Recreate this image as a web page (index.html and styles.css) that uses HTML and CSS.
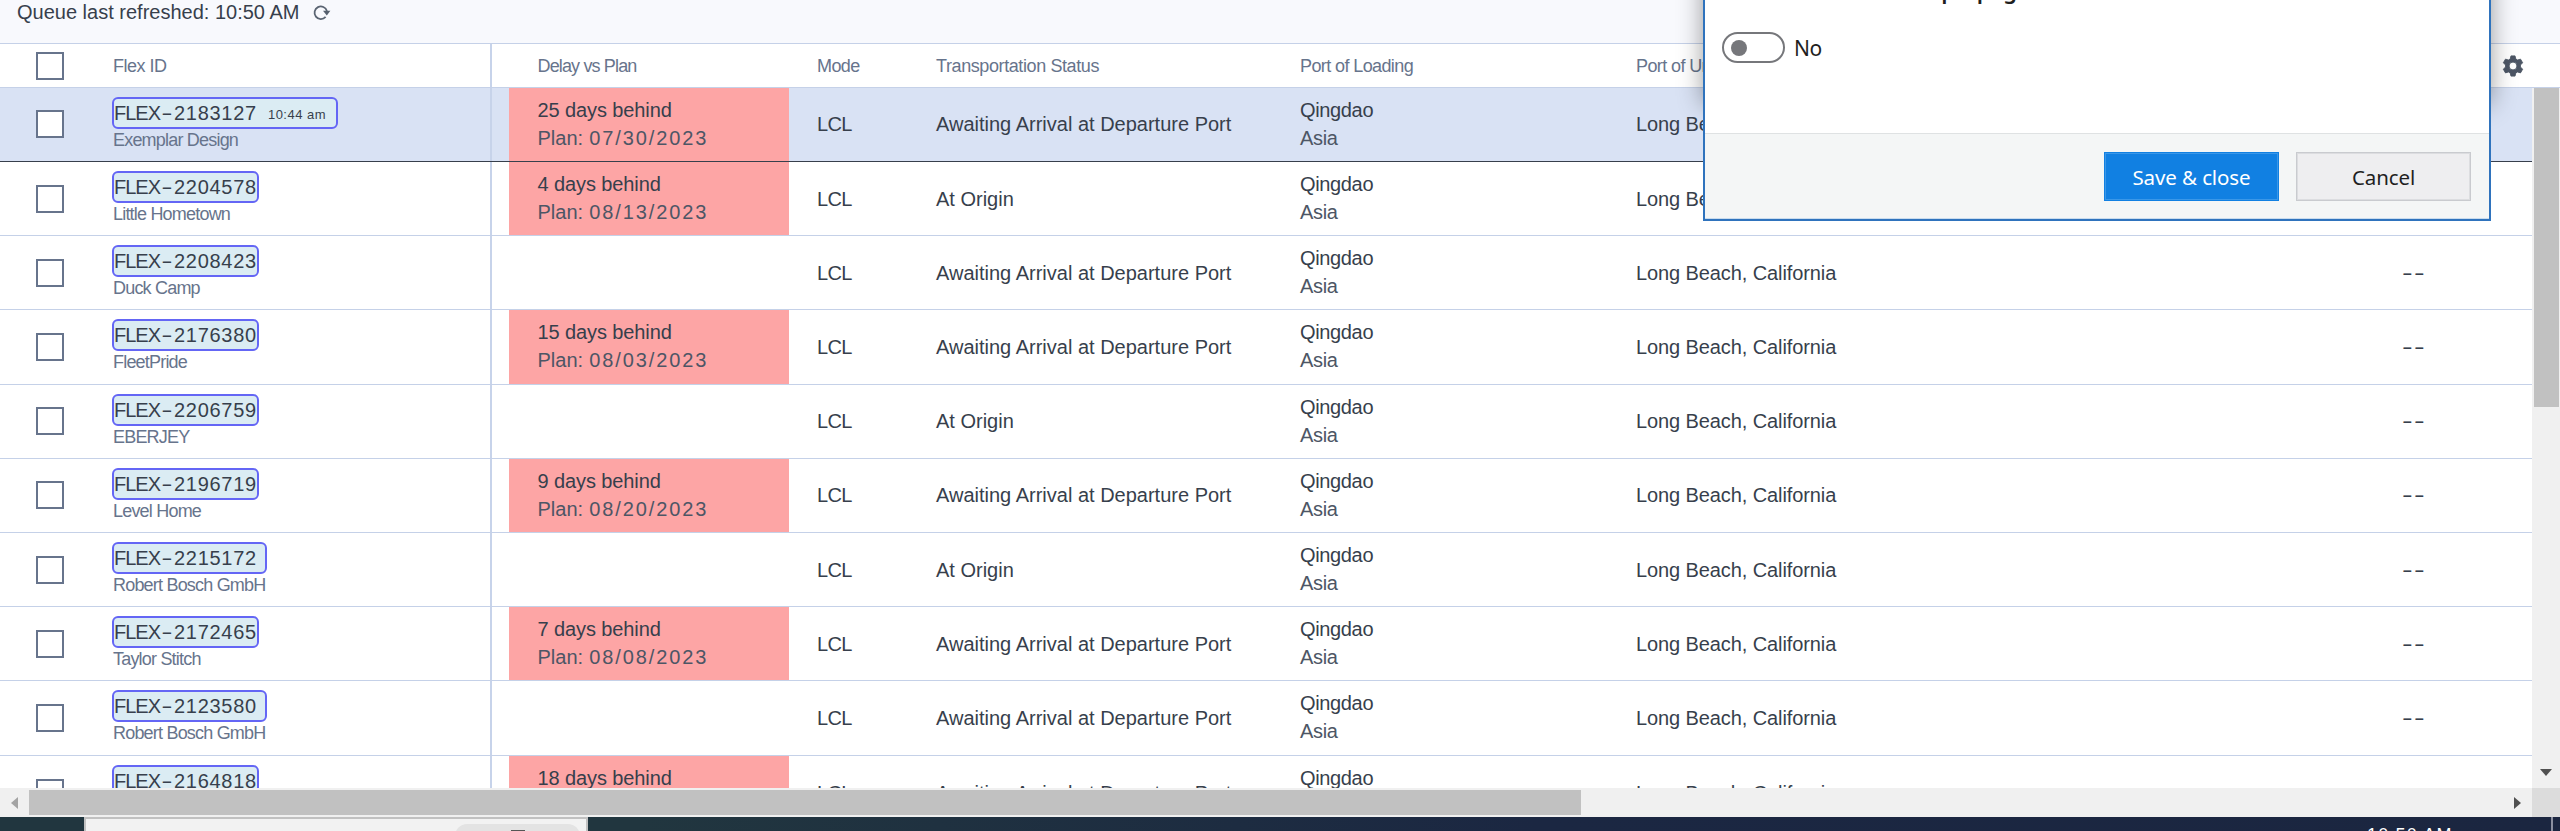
FILE: index.html
```html
<!DOCTYPE html>
<html lang="en">
<head>
<meta charset="utf-8">
<title>Queue</title>
<link rel="stylesheet" href="styles.css">
</head>
<body>
<main class="app">
  <div class="topbar">
    <span class="refreshed">Queue last refreshed: 10:50 AM</span>
    <svg class="refresh" viewBox="0 0 18 18"><path d="M12.6 13.9A6.3 6.3 0 1 1 13.9 8" fill="none" stroke="#5a6472" stroke-width="1.8"/><path d="M10 7.8h7.4l-3.6 4.6z" fill="#56606e"/></svg>
  </div>
  <div class="header">
    <div class="c-check"><span class="box"></span></div>
    <div class="c-id"><span class="h h-id">Flex ID</span></div>
    <div class="c-delay"><span class="h h-delay">Delay vs Plan</span></div>
    <div class="c-mode"><span class="h h-mode">Mode</span></div>
    <div class="c-status"><span class="h h-status">Transportation Status</span></div>
    <div class="c-load"><span class="h h-load">Port of Loading</span></div>
    <div class="c-unload"><span class="h h-load">Port of Unloading</span></div>
    <svg class="gear" viewBox="0 0 24 24"><path fill="#4d5665" stroke="#4d5665" stroke-linejoin="round" fill-rule="evenodd" d="M9.8 1h4.4l.8 3.4 2 1.1 3.2-1 2.3 4-2.4 2.4v2.2l2.4 2.4-2.3 4-3.2-1-2 1.1-.8 3.4H9.8L9 19.600l-2-1.100-3.200 1-2.300-4 2.400-2.400v-2.200L1.500 8.500l2.300-4 3.200 1 2-1.100zM12 7.700a4.300 4.300 0 1 0 0 8.600 4.300 4.300 0 0 0 0-8.600z"/></svg>
  </div>
  <div class="viewport">
    <div class="rows" id="rows"></div>
    <div class="vscroll"><span class="vthumb"></span><span class="down"></span></div>
  </div>
  <div class="hscroll">
    <div class="htrack"><span class="left"></span><span class="hthumb"></span><span class="right"></span></div>
    <div class="corner"></div>
  </div>
  <div class="taskbar">
    <div class="search"><span class="pill"><span class="mark"></span></span></div>
    <span class="clock">10:50 AM</span>
    <span class="peek"></span>
  </div>
</main>
<div class="dialog-shadow"></div>
<section class="dialog">
  <div class="dialog-title">Show the scope page</div>
  <div class="dialog-body"><span class="toggle"><span class="knob"></span></span><span class="no">No</span></div>
  <div class="dialog-foot"><button class="btn save">Save &amp; close</button><button class="btn cancel">Cancel</button></div>
</section>
<script src="rows.js"></script>
</body>
</html>
```

FILE: styles.css
```css
* { box-sizing: border-box; }
body { margin: 0; background: #fff; font-family: "Liberation Sans", Arial, sans-serif; color: #373f4c; overflow: hidden; }
.app { width: 2560px; height: 831px; display: flex; flex-direction: column; overflow: hidden; }

.topbar { height: 44px; flex: none; background: #f8f9fd; border-bottom: 1px solid #c5d1e8; display: flex; align-items: flex-start; padding-left: 17px; }
.refreshed { font-size: 20px; line-height: 24px; white-space: nowrap; width: 296px; }
.refresh { width: 18px; height: 18px; margin-top: 3px; }

.header { height: 44px; flex: none; display: flex; align-items: center; border-bottom: 1px solid #c5d1e8; }
.header > div { height: 43px; display: flex; align-items: center; }
.h { font-size: 18px; line-height: 22px; color: #67748c; white-space: nowrap; }
.h-id { letter-spacing: -0.5px; padding-left: 1px; }
.h-delay { letter-spacing: -0.85px; }
.h-mode { letter-spacing: -0.6px; }
.h-status { letter-spacing: -0.4px; }
.h-load { letter-spacing: -0.6px; }
.gear { width: 22px; height: 22px; margin-left: 860px; }

.c-check { width: 112px; padding-left: 36px; flex: none; display: flex; align-items: center; }
.c-id { width: 380px; flex: none; border-right: 2px solid #c7d3ea; }
.c-delay { width: 280px; margin-left: 17px; padding-left: 28.5px; flex: none; }
.c-mode { width: 119px; padding-left: 28px; flex: none; }
.c-status { width: 364px; padding-left: 28px; flex: none; }
.c-load { width: 336px; padding-left: 28px; flex: none; }
.c-unload { padding-left: 28px; flex: none; white-space: nowrap; }
.header .c-unload { width: 34px; }
.box { width: 28px; height: 28px; border: 2px solid #67748c; background: #fff; }

.viewport { height: 700px; flex: none; display: flex; overflow: hidden; }
.rows { width: 2532px; height: 700px; overflow: hidden; flex: none; }
.row { height: 74px; border-bottom: 1px solid #c5d1e8; display: flex; font-size: 20px; line-height: 28px; white-space: nowrap; }
.row.tall { height: 75px; }
.row.sel { background: #d9e2f4; border-bottom-color: #373f4c; }
.row > div { display: flex; }
.row .c-id { flex-direction: column; align-items: flex-start; padding-top: 9px; }
.row .c-delay, .row .c-load { flex-direction: column; padding-top: 8px; }
.row .c-mode, .row .c-status, .row .c-unload, .row .c-last { align-items: center; }
.row.raised .c-check, .row.raised .c-mode, .row.raised .c-status, .row.raised .c-unload, .row.raised .c-last { padding-bottom: 1px; }
.row.late .c-delay { background: #fda5a5; }
.c-load { letter-spacing: -0.35px; }
.c-mode { letter-spacing: -0.6px; }
.c-unload { letter-spacing: -0.1px; }
.sub { color: #4d5665; }
.row .c-delay > span:first-child { letter-spacing: -0.1px; }
.date { letter-spacing: 1.9px; margin-left: 0.5px; }

.tag { height: 32px; border: 2px solid #6466f5; border-radius: 6px; background: #dbecf3; line-height: 28px; display: flex; width: 147px; }
.tag.wide { width: 155px; }
.tag.timed { width: 226px; }
.tag .prefix { width: 46px; letter-spacing: -1px; }
.tag .dash { width: 14px; text-align: center; transform: scaleX(1.7); }
.tag .digits { letter-spacing: 0.72px; }
.tag small { font-size: 13px; line-height: 32px; letter-spacing: 0.5px; margin-left: 11px; }
.name { font-size: 18px; line-height: 22px; color: #67748c; margin-left: 1px; letter-spacing: -0.8px; }
.row .c-last { margin-left: auto; width: 130px; }
.c-last span { width: 12px; transform: scaleX(1.6); transform-origin: 0 50%; }

.vscroll { width: 28px; background: #f0f0f0; display: flex; flex-direction: column; align-items: center; justify-content: space-between; padding-bottom: 12px; }
.vthumb { width: 25px; height: 319px; background: #c1c1c1; }
.down { border: 6.5px solid transparent; border-top: 7px solid #505050; border-bottom: 0; }
.hscroll { height: 29px; flex: none; display: flex; }
.htrack { width: 2532px; background: #f0f0f0; display: flex; align-items: center; padding: 0 11px; }
.corner { width: 28px; background: #dcdcdc; }
.left { border: 6.5px solid transparent; border-right: 7px solid #a3a3a3; border-left: 0; }
.hthumb { width: 1552px; height: 25px; margin-left: 11px; background: #c1c1c1; }
.right { border: 6.5px solid transparent; border-left: 7px solid #505050; border-right: 0; margin-left: auto; }

.taskbar { height: 14px; flex: none; background: linear-gradient(90deg, #21363f 0, #21363f 25%, #1b2742 60%, #1b2640 100%); display: flex; padding-left: 84px; overflow: hidden; }
.search { width: 504px; height: 20px; border: 2px solid #c1c1c1; background: #f2f2f2; padding: 5px 6px 0; display: flex; justify-content: flex-end; }
.pill { width: 125px; height: 24px; border-radius: 12px; background: #e3e3e3; display: flex; justify-content: center; padding-top: 6px; }
.mark { width: 14px; height: 4px; background: #555; }
.clock { color: #fff; font-size: 18px; line-height: 20px; letter-spacing: 1.2px; margin: 8px 0 0 auto; width: 184px; }
.peek { width: 2px; background: #8b90a0; margin-right: 7px; }

.dialog-shadow { position: absolute; left: 1704px; top: -60px; width: 786px; height: 164px; box-shadow: 0 0 24px rgba(0, 0, 0, .42); }
.dialog { position: absolute; left: 1703px; top: -60px; width: 788px; height: 281px; background: #fff; border: 2px solid #2f73bd; display: flex; flex-direction: column; font-family: "Noto Sans", sans-serif; color: #1f1f1f; }
.dialog-title { height: 63px; display: flex; align-items: flex-end; padding-left: 90px; font-size: 22px; line-height: 30px; font-weight: 600; word-spacing: 3px; white-space: pre; }
.dialog-body { height: 128px; display: flex; align-items: flex-start; padding: 27px 0 0 17px; }
.toggle { width: 63px; height: 31px; border: 2px solid #76777b; border-radius: 16px; padding: 6px 7px; }
.knob { display: block; width: 16px; height: 16px; border-radius: 50%; background: #76777b; }
.no { font-size: 21px; line-height: 33px; margin-left: 9px; letter-spacing: -0.4px; }
.dialog-foot { flex: 1; background: #f4f6f6; border-top: 1px solid #dfe2e3; border-bottom: 1px solid #c9dcee; display: flex; justify-content: flex-end; gap: 17px; padding: 18px 18px 0 0; }
.btn { width: 175px; height: 49px; padding: 0; font: 20.5px/28px "Noto Sans", sans-serif; letter-spacing: -0.1px; }
.save { background: #1180e2; color: #fff; border: 1px solid #1180e2; box-shadow: inset 0 0 0 1px #3a97e8; }
.cancel { background: #eeeef0; color: #1f1f1f; border: 1px solid #c9cbcf; box-shadow: inset 0 0 0 1px #dcdde0; }
```

FILE: rows.js
```js
const AWAITING = "Awaiting Arrival at Departure Port";
const ORIGIN = "At Origin";

const shipments = [
  { id: "2183127", time: "10:44 am", client: "Exemplar Design", days: 25, plan: "07/30/2023", status: AWAITING, mods: "sel raised" },
  { id: "2204578", client: "Little Hometown", days: 4, plan: "08/13/2023", status: ORIGIN },
  { id: "2208423", client: "Duck Camp", status: AWAITING },
  { id: "2176380", client: "FleetPride", days: 15, plan: "08/03/2023", status: AWAITING, mods: "tall" },
  { id: "2206759", client: "EBERJEY", status: ORIGIN, mods: "raised" },
  { id: "2196719", client: "Level Home", days: 9, plan: "08/20/2023", status: AWAITING, mods: "raised" },
  { id: "2215172", client: "Robert Bosch GmbH", status: ORIGIN, wide: true },
  { id: "2172465", client: "Taylor Stitch", days: 7, plan: "08/08/2023", status: AWAITING },
  { id: "2123580", client: "Robert Bosch GmbH", status: AWAITING, wide: true, mods: "tall" },
  { id: "2164818", client: "", days: 18, status: AWAITING },
];

document.getElementById("rows").innerHTML = shipments.map((s, i) => {
  const partial = i === shipments.length - 1;
  const late = s.days !== undefined;
  const tag = s.time ? " timed" : s.wide ? " wide" : "";
  return `<div class="row ${s.mods || ""} ${late ? "late" : ""}">
    <div class="c-check"><span class="box"></span></div>
    <div class="c-id">
      <div class="tag${tag}"><span class="prefix">FLEX</span><span class="dash">-</span><span class="digits">${s.id}</span>${s.time ? `<small>${s.time}</small>` : ""}</div>
      <span class="name">${s.client}</span>
    </div>
    <div class="c-delay">${late ? `<span>${s.days} days behind</span>` : ""}${s.plan ? `<span class="sub">Plan: <span class="date">${s.plan}</span></span>` : ""}</div>
    <div class="c-mode">LCL</div>
    <div class="c-status">${s.status}</div>
    <div class="c-load"><span>Qingdao</span>${partial ? "" : `<span class="sub">Asia</span>`}</div>
    <div class="c-unload">Long Beach, California</div>
    <div class="c-last"><span>-</span><span>-</span></div>
  </div>`;
}).join("");
```
